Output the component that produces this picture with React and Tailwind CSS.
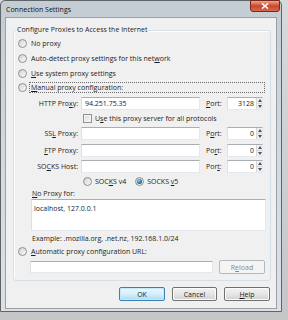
import React from 'react';

const font = "font-['Open_Sans','Liberation_Sans',sans-serif]";

function Radio({ checked }) {
  return (
    <span className="w-[9px] h-[9px] rounded-full border border-[#8d9195] bg-gradient-to-br from-[#cfd2d5] to-[#fbfbfb] flex items-center justify-center shrink-0">
      {checked && (
        <span className="w-[5px] h-[5px] rounded-full bg-[radial-gradient(circle_at_40%_35%,#7fd8f8,#1a6f9e_60%,#0b4a72)]" />
      )}
    </span>
  );
}

function U({ children }) {
  return <span className="underline underline-offset-[1px] decoration-[0.6px]">{children}</span>;
}

function TextBox({ className = '', children }) {
  return (
    <div className={`bg-white border border-t-[#abadb3] border-l-[#dbdfe6] border-r-[#e3e9ef] border-b-[#e3e9ef] ${className}`}>
      {children}
    </div>
  );
}

function PortBox({ value }) {
  return (
    <div className="w-[36px] h-[13px] flex bg-white border border-t-[#abadb3] border-l-[#dbdfe6] border-r-[#e3e9ef] border-b-[#e3e9ef]">
      <div className="flex-1 flex items-center justify-end pr-[2px]">{value}</div>
      <div className="w-[6px] flex flex-col border-l border-[#d4d7db]">
        <div className="flex-1 flex items-center justify-center bg-[#eef0f2] border-b border-[#d4d7db]">
          <svg width="4" height="3" viewBox="0 0 4 3"><path d="M0 3 L2 0 L4 3Z" fill="#4d5257" /></svg>
        </div>
        <div className="flex-1 flex items-center justify-center bg-[#eef0f2]">
          <svg width="4" height="3" viewBox="0 0 4 3"><path d="M0 0 L2 3 L4 0Z" fill="#4d5257" /></svg>
        </div>
      </div>
    </div>
  );
}

function ProxyRow({ label, port, portValue, h }) {
  return (
    <div className={`flex items-center ${h}`}>
      <div className="w-[64px] text-right">{label}</div>
      <TextBox className="ml-[3px] w-[119px] h-[13px] flex items-center pl-[3px]">{port === 'http' ? '94.251.75.35' : ''}</TextBox>
      <div className="ml-[6px] w-[21px]">{portValue.label}</div>
      <PortBox value={portValue.value} />
    </div>
  );
}

function Button({ children, w, focused, disabled }) {
  const base = focused
    ? 'border-[#3c7fb1] bg-gradient-to-b from-[#eaf6fd] via-[#d9f0fc] to-[#a7d9f5] shadow-[inset_0_0_0_1px_#cbe8f9]'
    : disabled
    ? 'border-[#b5b9bc] bg-[#f4f4f4] text-[#8a8a8a]'
    : 'border-[#707070] bg-gradient-to-b from-[#f2f2f2] via-[#e6e6e6] to-[#d0d0d0] shadow-[inset_0_0_0_1px_#fcfcfc]';
  return (
    <div className={`${w} h-[14px] rounded-[2px] border flex items-center justify-center ${base}`}>
      {children}
    </div>
  );
}

export default function App() {
  return (
    <div className={`w-[288px] h-[320px] overflow-hidden bg-gradient-to-b from-[#d7d9db] to-[#c4c6c8] text-[7px] leading-none text-[#1c1c1c] ${font}`}>
      <div className="w-[282px] h-[312px] border border-[#5f6469] rounded-t-[5px] bg-gradient-to-b from-[#c4ccd4] via-[#d3d9df] to-[#dde1e5] flex flex-col">
        {/* title bar */}
        <div className="h-[16px] flex justify-between pl-[5px]">
          <div className="pt-[5px] text-[#111]">Connection Settings</div>
          <div className="w-[30px] h-[12px] -mt-[1px] mr-[1px] rounded-b-[3px] border border-[#7a2a1c] bg-gradient-to-b from-[#e8a592] via-[#c9452d] to-[#d66a4d] flex items-center justify-center">
            <svg width="8" height="6" viewBox="0 0 8 6">
              <path d="M1 0.5 L7 5.5 M7 0.5 L1 5.5" stroke="#fff" strokeWidth="1.6" />
            </svg>
          </div>
        </div>

        {/* client area */}
        <div className="mx-[4px] h-[292px] border border-[#97a1ab] bg-[#f0f0f0] flex flex-col">
          <fieldset className="ml-[7px] mt-[7px] w-[258px] h-[256px] border border-[#d5dfe5] rounded-[3px] shadow-[inset_1px_1px_0_#ffffff]">
            <legend className="ml-[2px] px-[1px] leading-[10px]">Configure Proxies to Access the Internet</legend>
            <div className="flex flex-col pt-[1px]">
              <div className="h-[15px] flex items-center pl-[4px] gap-[4px]">
                <Radio />
                <span>No proxy</span>
              </div>
              <div className="h-[15px] flex items-center pl-[4px] gap-[4px]">
                <Radio />
                <span>Auto-detect proxy settings for this net<U>w</U>ork</span>
              </div>
              <div className="h-[14px] flex items-center pl-[4px] gap-[4px]">
                <Radio />
                <span><U>U</U>se system proxy settings</span>
              </div>
              <div className="h-[15px] flex items-center pl-[4px] gap-[2px]">
                <Radio />
                <span className="flex-1 mr-[5px] h-[11px] flex items-center px-[1px] border border-dotted border-[#6b6b6b]"><U>M</U>anual proxy configuration:</span>
              </div>

              <ProxyRow h="h-[17px]" port="http" label={<>HTTP Pro<U>x</U>y:</>} portValue={{ label: <><U>P</U>ort:</>, value: '3128' }} />

              <div className="h-[12px] flex items-center pl-[69px] gap-[3px]">
                <span className="w-[9px] h-[9px] border border-[#8f9398] bg-gradient-to-br from-[#d8dbde] to-[#fafafa] shadow-[inset_0_0_0_1px_#f4f4f4]" />
                <span>U<U>s</U>e this proxy server for all protocols</span>
              </div>

              <ProxyRow h="h-[18px]" label={<>SS<U>L</U> Proxy:</>} portValue={{ label: <>P<U>o</U>rt:</>, value: '0' }} />
              <ProxyRow h="h-[17px]" label={<><U>F</U>TP Proxy:</>} portValue={{ label: <>Po<U>r</U>t:</>, value: '0' }} />
              <ProxyRow h="h-[14px]" label={<>SO<U>C</U>KS Host:</>} portValue={{ label: <>Por<U>t</U>:</>, value: '0' }} />

              <div className="h-[16px] flex items-center pl-[69px]">
                <Radio />
                <span className="ml-[3px]">SOC<U>K</U>S v4</span>
                <span className="ml-[9px]"><Radio checked /></span>
                <span className="ml-[3px]">SOCKS <U>v</U>5</span>
              </div>

              <div className="h-[9px] flex items-center pl-[18px]">
                <span><U>N</U>o Proxy for:</span>
              </div>
              <div className="h-[33px] pt-[1px] pl-[17px]">
                <TextBox className="w-[235px] h-[32px] pl-[2px] pt-[5px]">localhost, 127.0.0.1</TextBox>
              </div>
              <div className="h-[15px] flex items-center pl-[18px]">
                Example: .mozilla.org, .net.nz, 192.168.1.0/24
              </div>
              <div className="h-[11px] flex items-center pl-[4px] gap-[4px]">
                <Radio />
                <span><U>A</U>utomatic proxy configuration URL:</span>
              </div>
              <div className="h-[20px] flex items-center pl-[16px] gap-[6px]">
                <TextBox className="w-[183px] h-[12px]" />
                <Button w="w-[46px]" disabled>R<U>e</U>load</Button>
              </div>
            </div>
          </fieldset>

          <div className="mt-[6px] flex justify-end gap-[7px] pr-[6px]">
            <Button w="w-[46px]" focused>OK</Button>
            <Button w="w-[45px]">Cancel</Button>
            <Button w="w-[46px]"><U>H</U>elp</Button>
          </div>
        </div>
      </div>
    </div>
  );
}
